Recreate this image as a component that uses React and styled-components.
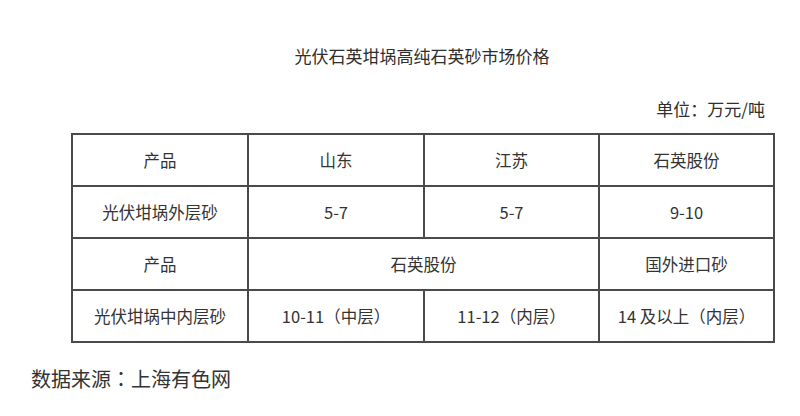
import React from "react";
import styled, { createGlobalStyle } from "styled-components";

const Global = createGlobalStyle`
  html, body { margin: 0; padding: 0; background: #fff; }
  body { font-family: "Noto Sans CJK SC", "Noto Sans", sans-serif; color: #333; }
`;

const Page = styled.div`
  width: 800px;
  height: 416px;
  box-sizing: border-box;
  padding-top: 44px;
  background: #fff;
`;

const Body = styled.div`
  width: 702px;
  margin-left: 71px;
  display: flex;
  flex-direction: column;
`;

const Title = styled.div`
  font-size: 17px;
  line-height: 24px;
  text-align: center;
  color: #2e2e2e;
`;

const Unit = styled.div`
  margin-top: 29px;
  padding-right: 8px;
  font-size: 17px;
  line-height: 24px;
  text-align: right;
  color: #2e2e2e;
`;

const Table = styled.table`
  margin-top: 12px;
  width: 702px;
  border-collapse: collapse;
  table-layout: fixed;
  border: 2px solid #4a4a4a;
`;

const Cell = styled.td`
  border: 2px solid #4a4a4a;
  height: 50px;
  padding: 0;
  text-align: center;
  vertical-align: middle;
  font-size: 16.5px;
  color: #333;
`;

const Footer = styled.div`
  margin-top: 22px;
  margin-left: 31px;
  font-family: "Noto Sans CJK TC", "Noto Sans CJK SC", sans-serif;
  font-size: 20px;
  line-height: 28px;
  color: #333;
`;

const rows = [
  ["产品", "山东", "江苏", "石英股份"],
  ["光伏坩埚外层砂", "5-7", "5-7", "9-10"],
];

export default function App() {
  return (
    <>
      <Global />
      <Page>
        <Body>
          <Title>光伏石英坩埚高纯石英砂市场价格</Title>
          <Unit>单位：万元/吨</Unit>
          <Table>
            <colgroup>
              <col style={{ width: 176 }} />
              <col style={{ width: 176 }} />
              <col style={{ width: 175 }} />
              <col style={{ width: 175 }} />
            </colgroup>
            <tbody>
              {rows.map((r, i) => (
                <tr key={i}>
                  {r.map((c, j) => (
                    <Cell key={j}>{c}</Cell>
                  ))}
                </tr>
              ))}
              <tr>
                <Cell>产品</Cell>
                <Cell colSpan={2}>石英股份</Cell>
                <Cell>国外进口砂</Cell>
              </tr>
              <tr>
                <Cell>光伏坩埚中内层砂</Cell>
                <Cell>10-11（中层）</Cell>
                <Cell>11-12（内层）</Cell>
                <Cell>14 及以上（内层）</Cell>
              </tr>
            </tbody>
          </Table>
        </Body>
        <Footer>数据来源：上海有色网</Footer>
      </Page>
    </>
  );
}
